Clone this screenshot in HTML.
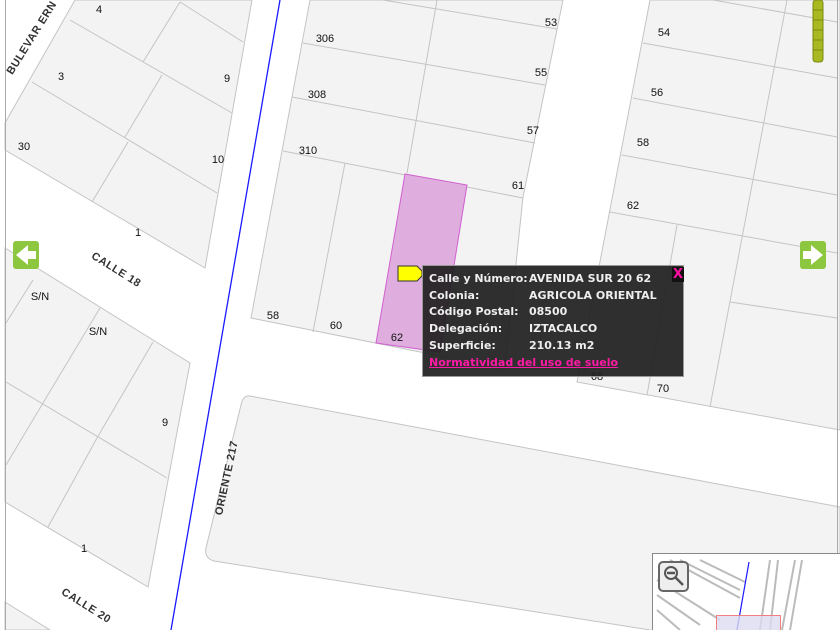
<!DOCTYPE html>
<html><head><meta charset="utf-8"><style>
html,body{margin:0;padding:0;background:#fff;width:840px;height:630px;overflow:hidden;position:relative;font-family:"Liberation Sans",sans-serif}
svg{position:absolute;left:0;top:0}
.pop{position:absolute;left:422px;top:265px;width:260px;height:110px;background:rgba(30,30,30,0.92);border:1px solid #999;color:#eee;font:bold 11px "DejaVu Sans",sans-serif;}
.pop div{position:absolute;left:6px;white-space:nowrap}
.pop span{position:absolute;left:100px}
.pop a{color:#ff1aa6;text-decoration:underline}
.pop .x{position:absolute;left:249px;top:1px;color:#ff10a0;background:#111;font:bold 13px "DejaVu Sans",sans-serif;padding:0 1px;line-height:15px}
</style></head><body>
<svg width="840" height="630" viewBox="0 0 840 630" font-family="Liberation Sans, sans-serif" font-size="11">
<g fill="#f3f3f3" stroke="#c4c4c4" stroke-width="1">
<polygon points="75,0 252,0 205,268 5,150 5,123"/>
<polygon points="5,248 190,363 148,587 5,502"/>
<polygon points="5,602 50,630 5,630"/>
<polygon points="310,0 563,0 523,197 505,369 251,318"/>
<polygon points="650,0 840,0 840,430 577,382"/>
<path d="M250,396 Q243,395 241,405 L206,548 Q204,558 214,561 L840,660 L840,507 Z"/>
</g>
<g fill="none" stroke="#c4c4c4" stroke-width="1">
<path d="M70,20 L232,113 M32,82 L217,193 M180,2 L243,42 M180,2 L143,62 M162,75 L125,137 M128,142 L92,202"/>
<path d="M6,382 L167,478 M100,308 L43,403 L6,465 M153,342 L97,438 L48,527 M33,280 L6,323"/>
<path d="M383,0 L557,29 M303,43 L545,85 M292,97 L535,143 M283,151 L523,198 M437,0 L407,173 M345,163 L313,332"/>
<path d="M713,0 L837,22 M643,43 L837,78 M633,98 L837,137 M622,155 L837,195 M610,212 L837,253 M787,0 L710,407 M677,225 L647,395 M730,302 L837,318"/>
</g>
<polygon points="405,174 467,185 440,352 376,343" fill="#dfaede" stroke="#d060d0" stroke-width="1"/>
<line x1="280" y1="0" x2="171" y2="630" stroke="#1a1aff" stroke-width="1.3"/>
<line x1="5.5" y1="0" x2="5.5" y2="630" stroke="#aaa"/>
<line x1="837.5" y1="0" x2="837.5" y2="630" stroke="#aaa"/>
<g fill="#111" text-anchor="middle" dominant-baseline="central">
<text x="99" y="10">4</text><text x="227" y="79">9</text><text x="61" y="77">3</text><text x="24" y="147">30</text><text x="218" y="160">10</text><text x="138" y="233">1</text>
<text x="40" y="297">S/N</text><text x="98" y="332">S/N</text><text x="165" y="423">9</text><text x="84" y="549">1</text>
<text x="325" y="39">306</text><text x="317" y="95">308</text><text x="308" y="151">310</text>
<text x="551" y="23">53</text><text x="541" y="73">55</text><text x="533" y="131">57</text><text x="518" y="186">61</text>
<text x="273" y="316">58</text><text x="336" y="326">60</text><text x="397" y="338">62</text>
<text x="664" y="33">54</text><text x="657" y="93">56</text><text x="643" y="143">58</text><text x="633" y="206">62</text>
<text x="597" y="377">68</text><text x="663" y="389">70</text>
</g>
<g fill="#333" font-weight="bold" font-size="11" text-anchor="middle" dominant-baseline="central" letter-spacing="0.5">
<text transform="translate(32,38) rotate(-58)">BULEVAR ERN</text>
<text transform="translate(116,270) rotate(32)">CALLE 18</text>
<text transform="translate(86,606) rotate(32)">CALLE 20</text>
<text transform="translate(227,478) rotate(-78)">ORIENTE 217</text>
</g>
<rect x="13" y="241" width="26" height="28" rx="3" fill="#8dc63f"/>
<path d="M16,255 L28,245 L28,251 L36,251 L36,259 L28,259 L28,265 Z" fill="#fff"/>
<rect x="800" y="241" width="26" height="28" rx="3" fill="#8dc63f"/>
<path d="M823,255 L811,245 L811,251 L803,251 L803,259 L811,259 L811,265 Z" fill="#fff"/>
<rect x="813" y="0" width="10" height="62" rx="3" fill="#a8b820" stroke="#7a8a10"/>
<path d="M813,10 H823 M813,20 H823 M813,30 H823 M813,40 H823 M813,50 H823" stroke="#7a8a10"/>
<path d="M398,266 H417 L422,271 V276 L417,281 H398 Z" fill="#ffff00" stroke="#333"/>
<rect x="652.5" y="553.5" width="190" height="80" fill="#fff" stroke="#888"/>
<g stroke="#bbb" fill="none" stroke-width="2">
<path d="M670,560 L740,598 M680,560 L740,590 M700,560 L745,582 M657,580 L720,620 M657,595 L700,625 M657,610 L680,630"/>
<path d="M770,560 L760,630 M778,560 L770,630 M795,560 L782,630 M802,560 L790,630"/>
</g>
<path d="M749,562 L737,630" stroke="#1a1aff" stroke-width="1.2"/>
<rect x="716.5" y="615.5" width="64" height="20" fill="#dcdcf0" fill-opacity="0.8" stroke="#f08080"/>
<rect x="659" y="562" width="29" height="29" rx="4" fill="#eee" stroke="#666" stroke-width="2"/>
<circle cx="671" cy="573" r="6" fill="none" stroke="#555" stroke-width="2"/>
<path d="M667,573 H675 M675,577 L683,585" stroke="#555" stroke-width="2.5"/>
</svg>
<div class="pop">
<div style="top:6px">Calle y Número:<span>AVENIDA SUR 20 62</span></div>
<div style="top:23px">Colonia:<span>AGRICOLA ORIENTAL</span></div>
<div style="top:39px">Código Postal:<span>08500</span></div>
<div style="top:56px">Delegación:<span>IZTACALCO</span></div>
<div style="top:73px">Superficie:<span>210.13 m2</span></div>
<div style="top:90px"><a>Normatividad del uso de suelo</a></div>
<div class="x">X</div>
</div>
</body></html>
